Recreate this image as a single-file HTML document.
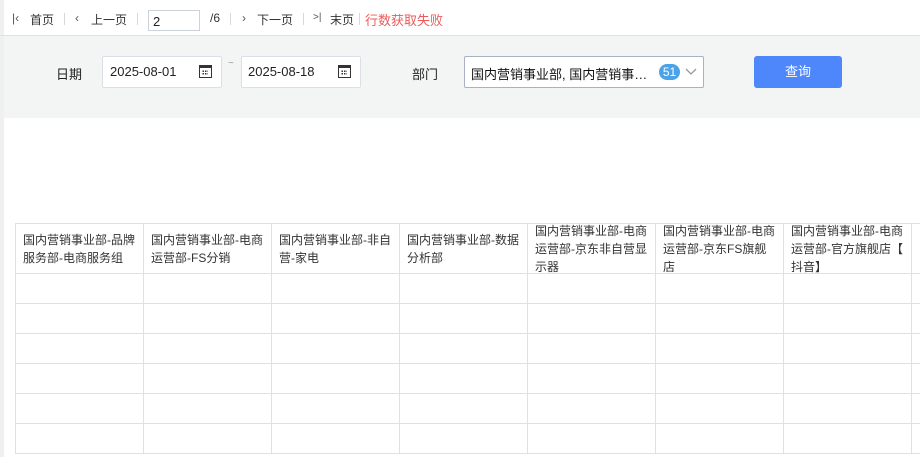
<!DOCTYPE html><html><head><meta charset="utf-8"><style>
*{margin:0;padding:0;box-sizing:border-box}
body{width:920px;height:457px;overflow:hidden;background:#fff;font-family:"Liberation Sans","Noto Sans CJK SC",sans-serif;font-size:12px;color:#222;position:relative}
.a{position:absolute}
.tb{top:0;left:0;width:920px;height:36px;border-bottom:1px solid #dde0e4}
.tb span{position:absolute;top:11px;font-size:12px;color:#333}
.sep{position:absolute;top:13px;width:1px;height:12px;background:#d8d8d8}
.f{top:36px;left:4px;width:916px;height:82px;background:#f3f4f4}
.inp{background:#fff;border:1px solid #dcdfe6;border-radius:2px;height:32px;top:56px}
.cal{position:absolute;right:9px;top:8px;width:13px;height:13px;border:1.5px solid #333;border-top-width:3px}
.cal:after{content:"";position:absolute;left:2px;top:2px;width:6px;height:5px;background:radial-gradient(circle,#333 0.8px,transparent 1px) 0 0/2.5px 2.5px}
.tw{position:absolute;left:15px;top:223px;width:905px;height:240px;overflow:hidden}
table{border-collapse:collapse;table-layout:fixed;width:1024px}
td{border:1px solid #dde1e6;width:128px;height:30px;padding:0 7px;vertical-align:top;font-size:12px;color:#333}
tr.h td{height:50px;padding:0 7px;line-height:18px}
tr.h td div{height:49px;display:flex;flex-direction:column;justify-content:center;overflow:visible}
</style></head><body>
<div class="a" style="left:0;top:0;width:4px;height:457px;background:#f0f0f0"></div>
<div class="a tb">
<span style="left:12px;color:#555">|&lsaquo;</span><span style="left:30px">首页</span><div class="sep" style="left:64px"></div>
<span style="left:75px;color:#555">&lsaquo;</span><span style="left:91px">上一页</span><div class="sep" style="left:137px"></div>
<div class="a" style="left:148px;top:10px;width:52px;height:21px;border:1px solid #ccd2dc;padding:3px 4px;font-size:13px">2</div>
<span style="left:210px">/6</span><div class="sep" style="left:230px"></div>
<span style="left:242px;color:#555">&rsaquo;</span><span style="left:257px">下一页</span><div class="sep" style="left:303px"></div>
<span style="left:313px;color:#555;font-size:10px;top:12px">&gt;|</span><span style="left:330px">末页</span><div class="sep" style="left:359px"></div>
<span style="left:365px;color:#ee5a5a;font-size:13px;top:10px">行数获取失败</span>
</div>
<div class="a f"></div>
<div class="a" style="left:56px;top:64px;font-size:13px">日期</div>
<div class="a inp" style="left:102px;width:120px"><span class="a" style="left:7px;top:7px;font-size:13px">2025-08-01</span><div class="cal"></div></div>
<div class="a" style="left:228px;top:58px;color:#999;font-size:10px">~</div>
<div class="a inp" style="left:241px;width:120px"><span class="a" style="left:6px;top:7px;font-size:13px">2025-08-18</span><div class="cal"></div></div>
<div class="a" style="left:412px;top:64px;font-size:13px">部门</div>
<div class="a inp" style="left:464px;width:240px;border-color:#a8b2c4"><span class="a" style="left:6px;top:7px;font-size:13px;color:#111">国内营销事业部, 国内营销事…</span>
<div class="a" style="left:194px;top:7px;width:21px;height:16px;border-radius:8px;background:#4aa3e8;color:#fff;font-size:12px;text-align:center;line-height:16px">51</div>
<svg class="a" style="left:219px;top:10px" width="14" height="10"><path d="M2 2l5 5 5-5" fill="none" stroke="#999" stroke-width="1.3"/></svg></div>
<div class="a" style="left:754px;top:56px;width:88px;height:32px;background:#4e86fb;border-radius:3px;color:#fff;text-align:center;line-height:32px;font-size:13px">查询</div>
<div class="tw"><table>
<tr class="h"><td><div>国内营销事业部-品牌服务部-电商服务组</div></td><td><div>国内营销事业部-电商运营部-FS分销</div></td><td><div>国内营销事业部-非自营-家电</div></td><td><div>国内营销事业部-数据分析部</div></td><td><div>国内营销事业部-电商运营部-京东非自营显示器</div></td><td><div>国内营销事业部-电商运营部-京东FS旗舰店</div></td><td><div><span>国内营销事业部-电商运营部-官方旗舰店【<br>抖音】</span></div></td><td><div>国内营销事业部</div></td></tr>
<tr><td></td><td></td><td></td><td></td><td></td><td></td><td></td><td></td></tr>
<tr><td></td><td></td><td></td><td></td><td></td><td></td><td></td><td></td></tr>
<tr><td></td><td></td><td></td><td></td><td></td><td></td><td></td><td></td></tr>
<tr><td></td><td></td><td></td><td></td><td></td><td></td><td></td><td></td></tr>
<tr><td></td><td></td><td></td><td></td><td></td><td></td><td></td><td></td></tr>
<tr><td></td><td></td><td></td><td></td><td></td><td></td><td></td><td></td></tr>
</table></div>
</body></html>
